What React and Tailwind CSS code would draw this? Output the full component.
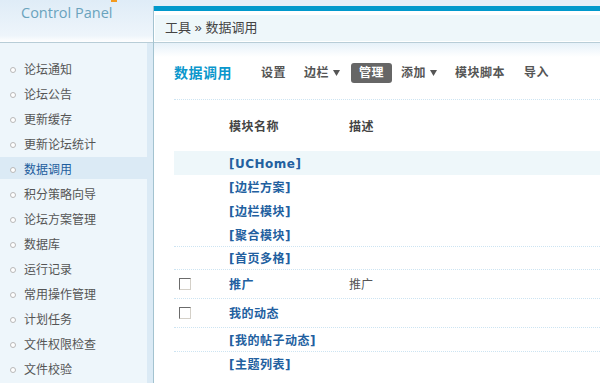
import React from 'react';

const menu = [
  '论坛通知',
  '论坛公告',
  '更新缓存',
  '更新论坛统计',
  '数据调用',
  '积分策略向导',
  '论坛方案管理',
  '数据库',
  '运行记录',
  '常用操作管理',
  '计划任务',
  '文件权限检查',
  '文件校验',
];

function Caret() {
  return (
    <svg width="7" height="6" viewBox="0 0 7 6" className="ml-[4px]">
      <path d="M0 0 L7 0 L3.5 6 Z" fill="#555" />
    </svg>
  );
}

function Checkbox() {
  return (
    <span className="block w-[12px] h-[12px] bg-white border border-t-[#6b6b6b] border-l-[#6b6b6b] border-r-[#d4d0c8] border-b-[#d4d0c8]" />
  );
}

export default function App() {
  return (
    <div className="w-[600px] h-[383px] overflow-hidden flex bg-white text-[12px] text-[#555] font-['Liberation_Sans','Noto_Sans_CJK_SC',sans-serif]">
      {/* Left column: logo + menu */}
      <div className="w-[153px] shrink-0 flex flex-col">
        <div className="h-[43px] shrink-0 border-b border-[#b8cdd7] bg-[linear-gradient(to_bottom,#dfecf7,#eef5fb_85%,#ffffff)]">
          <div className="h-[3px] flex">
            <span className="ml-[111px] w-[6px] h-[2px] bg-[#f39a1e]" />
          </div>
          <p className="pl-[21px] text-[14.5px] leading-[20px] text-[#6aa3bd] font-['Open_Sans',sans-serif]">Control Panel</p>
        </div>
        <div className="flex-1 flex">
          <ul className="w-[147px] pt-[14px] bg-[#eef6fb]">
            {menu.map((item) => {
              const active = item === '数据调用';
              return (
                <li
                  key={item}
                  className={
                    active
                      ? 'h-[22px] mb-[3px] pt-[3px] flex items-center pl-[10px] bg-[#dbeaf5] text-[#1d5d9d]'
                      : 'h-[22px] mb-[3px] pt-[3px] flex items-center pl-[10px]'
                  }
                >
                  <span className="w-[6px] h-[6px] rounded-full border border-[#b8b8b8] bg-white mr-[8px]" />
                  {item}
                </li>
              );
            })}
          </ul>
          <div className="w-[6px] bg-[#dbeaf5]" />
        </div>
      </div>

      {/* Main column */}
      <div className="flex-1 flex flex-col bg-[#e3eff8]">
        <div className="h-[6px] shrink-0" />
        <div className="flex-1 flex flex-col bg-white border-l border-[#a3c3d0]">
          <div className="h-[5px] bg-[#0099cc]" />
          <div className="pt-[4px] pl-[1px] pb-[1px]">
            <div className="h-[26px] bg-[#eef7fa] flex items-center pl-[10px] text-[13px] text-[#444]">
              工具 » 数据调用
            </div>
          </div>
          <div className="border-b border-[#b8cdd7]" />

          <div className="flex-1 pl-[20px] bg-[linear-gradient(to_bottom,#e6f1f9,#ffffff_14px)]">
            <div className="h-[57px] flex items-center pt-[4px] border-b border-dotted border-[#cde4f2]">
              <h1 className="text-[14px] font-bold tracking-[0.5px] text-[#0a97cc] mr-[21px]">数据调用</h1>
              <nav className="flex items-center font-bold tracking-[0.5px]">
                <span className="px-[8px] leading-[20px]">设置</span>
                <span className="ml-[2px] px-[8px] leading-[20px] flex items-center">边栏<Caret /></span>
                <span className="ml-[3px] px-[8px] leading-[20px] rounded-[3px] bg-[#666] text-white">管理</span>
                <span className="ml-[1px] px-[8px] leading-[20px] flex items-center">添加<Caret /></span>
                <span className="ml-[2px] px-[8px] leading-[20px]">模块脚本</span>
                <span className="ml-[3px] px-[8px] leading-[20px]">导入</span>
              </nav>
            </div>

            <div className="h-[51px] pt-[3px] flex items-center font-bold tracking-[0.5px] text-[#444]">
              <span className="w-[55px]" />
              <span className="w-[120px]">模块名称</span>
              <span>描述</span>
            </div>

            <div className="font-bold tracking-[0.5px] text-[#22609f] font-['DejaVu_Sans','Noto_Sans_CJK_SC',sans-serif]">
              <div className="h-[24px] pt-[2px] flex items-center bg-[#eef7fa]">
                <span className="w-[55px]" />
                <span>[UCHome]</span>
              </div>
              <div className="h-[24px] pt-[2px] flex items-center">
                <span className="w-[55px]" />
                <span>[边栏方案]</span>
              </div>
              <div className="h-[24px] pt-[2px] flex items-center">
                <span className="w-[55px]" />
                <span>[边栏模块]</span>
              </div>
              <div className="h-[24px] pt-[2px] flex items-center border-b border-dotted border-[#cde4f2]">
                <span className="w-[55px]" />
                <span>[聚合模块]</span>
              </div>
              <div className="h-[23px] pt-[2px] flex items-center border-b border-dotted border-[#cde4f2]">
                <span className="w-[55px]" />
                <span>[首页多格]</span>
              </div>
              <div className="h-[29px] flex items-center border-b border-dotted border-[#cde4f2]">
                <span className="w-[55px] pl-[5px]"><Checkbox /></span>
                <span className="w-[120px] pt-[2px]">推广</span>
                <span className="pt-[2px] font-normal tracking-normal text-[#555] font-['Liberation_Sans','Noto_Sans_CJK_SC',sans-serif]">推广</span>
              </div>
              <div className="h-[29px] flex items-center border-b border-dotted border-[#cde4f2]">
                <span className="w-[55px] pl-[5px]"><Checkbox /></span>
                <span className="pt-[2px]">我的动态</span>
              </div>
              <div className="h-[24px] pt-[2px] flex items-center border-b border-dotted border-[#cde4f2]">
                <span className="w-[55px]" />
                <span>[我的帖子动态]</span>
              </div>
              <div className="h-[24px] pt-[2px] flex items-center">
                <span className="w-[55px]" />
                <span>[主题列表]</span>
              </div>
            </div>
          </div>
        </div>
      </div>
    </div>
  );
}
